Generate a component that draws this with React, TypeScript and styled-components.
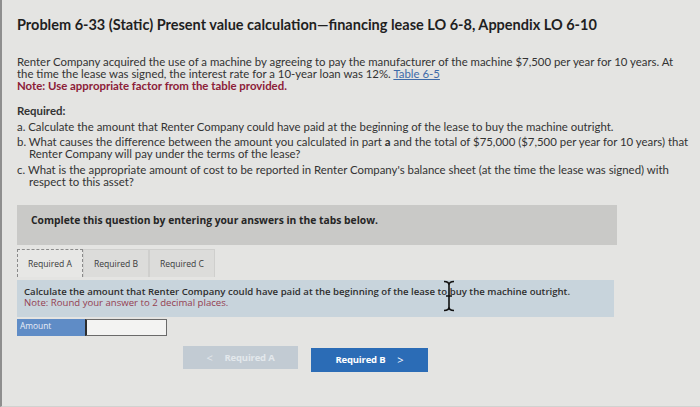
import React from 'react';
import styled, { createGlobalStyle } from 'styled-components';

const GlobalStyle = createGlobalStyle`
  html, body {
    margin: 0;
    padding: 0;
    background: #e4e4e2;
  }
`;

const Page = styled.div`
  position: relative;
  box-sizing: border-box;
  height: 407px;
  overflow: hidden;
  border-left: 2px solid #8e8e8e;
  border-bottom: 1px solid #d2d2d0;
  padding: 16px 0 0 15px;
  color: #2b2b2b;
  font-family: Lato, 'Open Sans', sans-serif;
`;

const Title = styled.h1`
  margin: 0;
  font-size: 14.5px;
  font-weight: 700;
  line-height: 18px;
  color: #1f1f1f;
`;

const Text = styled.div`
  margin-top: 22px;
  font-size: 11.4px;
  line-height: 12px;
  color: #333;
  white-space: nowrap;
`;

const TableLink = styled.span`
  color: #3d6aa8;
  text-decoration: underline;
`;

const RedNote = styled.div`
  color: #8c2038;
  font-weight: 700;
`;

const Required = styled.div`
  margin-top: 13px;
  font-size: 11.4px;
  line-height: 12px;
  color: #333;
  white-space: nowrap;
`;

const ReqItem = styled.div`
  margin-top: 3.5px;
`;

const Continued = styled.div`
  padding-left: 12px;
`;

const QuestionBox = styled.div`
  margin-top: 17px;
  width: 600px;
  height: 40px;
  box-sizing: border-box;
  padding: 5px 0 0 14px;
  background: #c9c9c7;
  font-family: 'Open Sans', sans-serif;
  font-size: 10.3px;
  font-weight: 700;
  line-height: 20px;
  color: #262626;
`;

const TabRow = styled.div`
  display: flex;
  margin-top: 4px;
  height: 28px;
`;

const Tab = styled.div<{ active?: boolean }>`
  box-sizing: border-box;
  width: 66px;
  display: flex;
  align-items: center;
  justify-content: center;
  padding-top: 2px;
  font-family: 'Open Sans', sans-serif;
  font-size: 8.6px;
  color: #3a3a3a;
  background: ${({ active }) => (active ? '#e7e7e5' : '#dcdcda')};
  border: 1px ${({ active }) => (active ? 'dashed #8a8a8a' : 'solid #cfcfcd')};
  border-bottom: none;
`;

const InfoPanel = styled.div`
  margin-top: 3px;
  width: 597px;
  box-sizing: border-box;
  padding: 6px 0 8px 7px;
  background: #c8d4dc;
  font-family: 'Open Sans', sans-serif;
  font-size: 9.6px;
  font-weight: 600;
  line-height: 11.5px;
  color: #2e2e2e;
  white-space: nowrap;
`;

const PanelNote = styled.div`
  color: #944052;
  font-weight: 400;
`;

const AmountRow = styled.div`
  display: flex;
  margin-top: 2px;
  height: 17px;
`;

const AmountLabel = styled.div`
  width: 68px;
  box-sizing: border-box;
  padding: 1px 0 0 3px;
  background: #5f8cc6;
  font-family: 'Open Sans', sans-serif;
  font-size: 8.4px;
  color: #e8eef7;
`;

const AmountInput = styled.div`
  width: 82px;
  box-sizing: border-box;
  background: #f3f3f2;
  border: 1px solid #6a6a6a;
  border-left: 2px solid #2d2d2d;
`;

const NavRow = styled.div`
  display: flex;
  align-items: flex-start;
  gap: 13px;
  margin: 10px 0 0 166px;
`;

const NavButton = styled.div<{ primary?: boolean }>`
  box-sizing: border-box;
  width: ${({ primary }) => (primary ? 117 : 115)}px;
  height: ${({ primary }) => (primary ? 24 : 23)}px;
  margin-top: ${({ primary }) => (primary ? 2 : 0)}px;
  display: flex;
  align-items: center;
  justify-content: center;
  gap: 12px;
  background: ${({ primary }) => (primary ? '#2b6cb6' : '#c2cbd3')};
  color: ${({ primary }) => (primary ? '#ffffff' : '#e3e8ec')};
  font-family: 'Open Sans', sans-serif;
  font-size: 9.5px;
  font-weight: 700;
  letter-spacing: -0.2px;
`;

const Chevron = styled.span`
  font-weight: 400;
  font-size: 11px;
`;

const Cursor = styled.svg`
  position: absolute;
  left: 440px;
  top: 280px;
`;

export default function App() {
  return (
    <>
      <GlobalStyle />
      <Page>
        <Title>Problem 6-33 (Static) Present value calculation—financing lease LO 6-8, Appendix LO 6-10</Title>
        <Text>
          <div>Renter Company acquired the use of a machine by agreeing to pay the manufacturer of the machine $7,500 per year for 10 years. At</div>
          <div>
            the time the lease was signed, the interest rate for a 10-year loan was 12%. <TableLink>Table 6-5</TableLink>
          </div>
          <RedNote>Note: Use appropriate factor from the table provided.</RedNote>
        </Text>
        <Required>
          <b>Required:</b>
          <ReqItem>a. Calculate the amount that Renter Company could have paid at the beginning of the lease to buy the machine outright.</ReqItem>
          <ReqItem>
            b. What causes the difference between the amount you calculated in part <b>a</b> and the total of $75,000 ($7,500 per year for 10 years) that
            <Continued>Renter Company will pay under the terms of the lease?</Continued>
          </ReqItem>
          <ReqItem>
            c. What is the appropriate amount of cost to be reported in Renter Company's balance sheet (at the time the lease was signed) with
            <Continued>respect to this asset?</Continued>
          </ReqItem>
        </Required>
        <QuestionBox>Complete this question by entering your answers in the tabs below.</QuestionBox>
        <TabRow>
          <Tab active>Required A</Tab>
          <Tab>Required B</Tab>
          <Tab>Required C</Tab>
        </TabRow>
        <InfoPanel>
          Calculate the amount that Renter Company could have paid at the beginning of the lease to buy the machine outright.
          <PanelNote>Note: Round your answer to 2 decimal places.</PanelNote>
        </InfoPanel>
        <AmountRow>
          <AmountLabel>Amount</AmountLabel>
          <AmountInput />
        </AmountRow>
        <NavRow>
          <NavButton>
            <Chevron>&lt;</Chevron> Required A
          </NavButton>
          <NavButton primary>
            Required B <Chevron>&gt;</Chevron>
          </NavButton>
        </NavRow>
        <Cursor width="14" height="32" viewBox="0 0 14 32">
          <path d="M2 1.5 Q7 1.5 7 5 Q7 1.5 12 1.5 M7 5 V27 Q7 30.5 2 30.5 M7 27 Q7 30.5 12 30.5 M4 16 H10"
            fill="none" stroke="#111" strokeWidth="1.6" />
        </Cursor>
      </Page>
    </>
  );
}
